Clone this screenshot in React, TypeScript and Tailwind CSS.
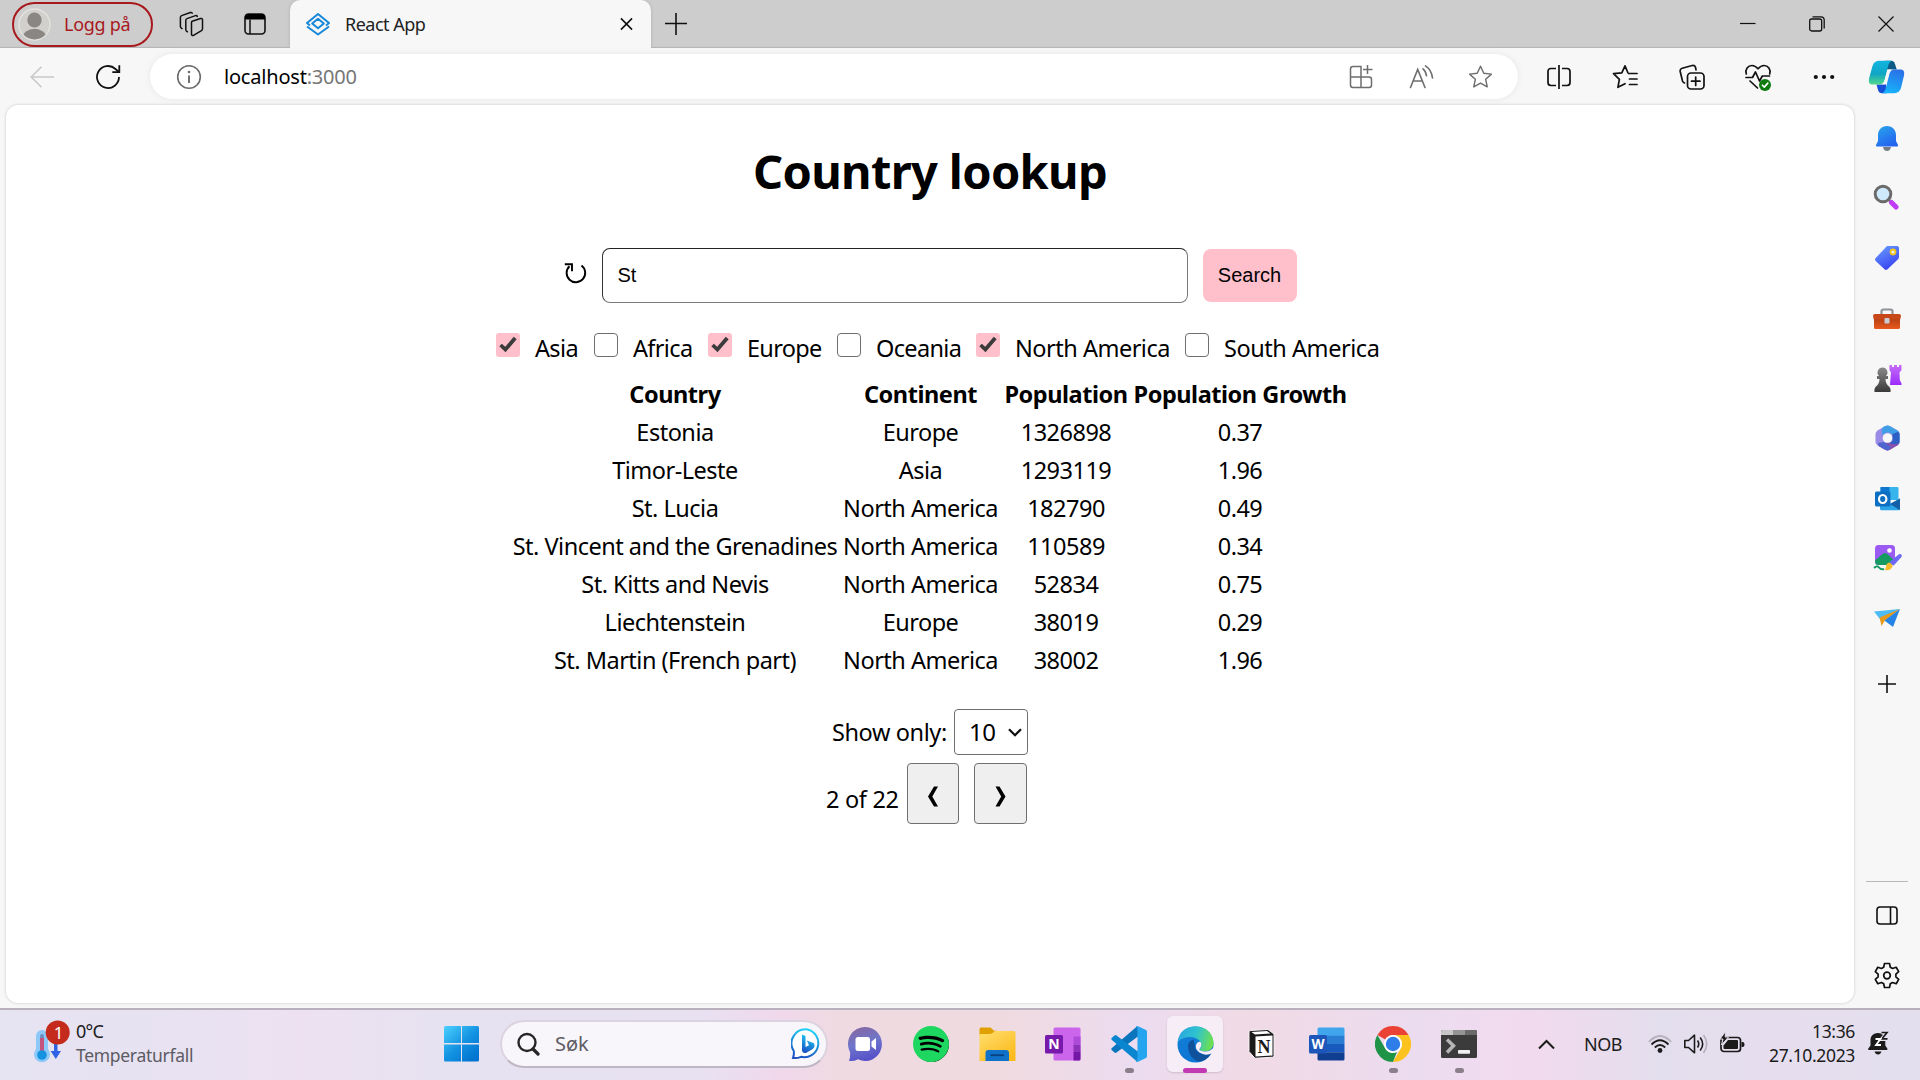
import React from "react";
import { SiSpotify } from "react-icons/si";

/* ---------- Title bar ---------- */

function TitleBar() {
  return (
    <header className="flex h-12 shrink-0 items-center bg-[#cdcdcd] shadow-[inset_0_-2px_1px_-1px_#b4b4b4]">
      <div className="ml-3 flex h-[45px] w-[141px] items-center rounded-full border-2 border-[#a8191e] pl-[4px]">
        <svg width="33" height="33" viewBox="0 0 33 33">
          <defs>
            <clipPath id="avatar">
              <circle cx="16.5" cy="16.5" r="15" />
            </clipPath>
          </defs>
          <circle cx="16.5" cy="16.5" r="15.5" fill="#d2d0cd" stroke="#e4e2de" strokeWidth="1.4" />
          <g clipPath="url(#avatar)" fill="#8a8683">
            <ellipse cx="16.5" cy="12" rx="7.2" ry="7.6" />
            <ellipse cx="16.5" cy="30" rx="12" ry="9.2" />
          </g>
        </svg>
        <span className="ml-[13px] text-[18px] leading-6 tracking-[-0.3px] text-[#a8191e]">Logg på</span>
      </div>
      <svg className="ml-[26px]" width="25" height="26" viewBox="0 0 25 26" fill="none" stroke="#111" strokeWidth="1.5" strokeLinejoin="round" strokeLinecap="round">
        <path d="M13.200 10.200 21.500 7.500q2-.5 2 1.300v9q0 1.200-1 1.800l-7.600 4.600q-1.700.8-2.400-.6V11.600q0-1 .7-1.400Z" />
        <path d="M18.300 5.400q-.4-1.200-1.800-.8L8 7.600q-1.200.4-1.200 1.700v9.400q0 1 1.700 2.100" />
        <path d="M13.200 2.300q-.5-1.200-1.800-.8L2.600 4.600q-1.200.5-1.200 1.700v9.200q0 1.200 1.600 2.200" />
      </svg>
      <svg className="ml-[40px]" width="22" height="22" viewBox="0 0 22 22" fill="none">
        <rect x="1" y="1" width="20" height="20" rx="3.500" stroke="#111" strokeWidth="1.600" />
        <path d="M1 6.500V4a3 3 0 0 1 3-3h14a3 3 0 0 1 3 3v2.500Z" fill="#000" />
        <path d="M6 6.500V21" stroke="#111" strokeWidth="1.500" />
      </svg>
      <div className="ml-[24px] flex h-12 w-[361px] items-center rounded-t-[10px] bg-[#f7f7f7] shadow-[0_0_3px_#aaa]">
        <svg className="ml-[15px]" width="26" height="24" viewBox="0 0 26 24" fill="none" stroke="#1787d8" strokeWidth="2" strokeLinejoin="round">
          <path d="M5 13.500 2 11 13 2l11 9-3 2.500" />
          <path d="m13 6.800 5.800 4.700-5.800 4.700-5.800-4.700Z" />
          <path d="m2 14.500 11 8 11-8" />
        </svg>
        <span className="ml-[14px] text-[18px] leading-6 tracking-[-0.5px] text-[#222]">React App</span>
        <svg className="mr-[18px] ml-auto" width="13" height="14" viewBox="0 0 14 14" stroke="#111" strokeWidth="1.700">
          <path d="m1 1 12 12M13 1 1 13" />
        </svg>
      </div>
      <svg className="ml-[14px]" width="22" height="22" viewBox="0 0 22 22" stroke="#111" strokeWidth="1.600">
        <path d="M0 10.500h22M11 0v22" />
      </svg>
      <div className="mr-[26px] ml-auto flex items-center gap-[53px]">
        <svg width="16" height="16" viewBox="0 0 16 16" stroke="#111" strokeWidth="1.200">
          <path d="M0 7.500h15.500" />
        </svg>
        <svg width="16" height="16" viewBox="0 0 16 16" fill="none" stroke="#111" strokeWidth="1.300">
          <rect x=".7" y="3" width="12" height="12" rx="2" />
          <path d="M3.500.8h8.500q3.200 0 3.200 3.200v8.500" />
        </svg>
        <svg width="16" height="16" viewBox="0 0 16 16" stroke="#111" strokeWidth="1.200">
          <path d="m.5.5 15 15M15.500.5l-15 15" />
        </svg>
      </div>
    </header>
  );
}

/* ---------- Toolbar ---------- */

const STAR = "m13 1.800 3.400 7.300 7.900.9-5.900 5.400 1.600 7.900-7-4-7 4 1.600-7.900L1.700 10l7.900-.9Z";

function Toolbar() {
  return (
    <div className="flex h-[57px] shrink-0 items-center bg-[#f7f7f7]">
      <svg className="ml-[30px]" width="24" height="22" viewBox="0 0 24 22" fill="none" stroke="#c9c9c9" strokeWidth="1.600">
        <path d="M24 11H1.500M11.500.8 1.200 11l10.300 10.200" />
      </svg>
      <svg className="ml-[41px]" width="26" height="26" viewBox="0 0 26 26" fill="none" stroke="#111" strokeWidth="1.800">
        <path d="M24 13A11 11 0 1 1 20.500 5L24 8" />
        <path d="M24.300 1.200v7h-7" />
      </svg>
      <div className="ml-[29px] flex h-[45px] w-[1368px] items-center rounded-full bg-white shadow-[0_0_6px_#e6e6e6]">
        <svg className="ml-[26px]" width="26" height="26" viewBox="0 0 26 26" fill="none" stroke="#6b6b6b" strokeWidth="1.600">
          <circle cx="13" cy="13" r="11.300" />
          <path d="M13 11.500v7.500" strokeWidth="1.900" />
          <circle cx="13" cy="8" r="1.300" fill="#6b6b6b" stroke="none" />
        </svg>
        <span className="ml-[22px] text-[20px] leading-6 tracking-[-0.2px] text-black">
          localhost<span className="text-[#767676]">:3000</span>
        </span>
        <svg className="ml-auto" width="24" height="24" viewBox="0 0 24 24" fill="none" stroke="#6e6e6e" strokeWidth="1.500">
          <path d="M12 22.500V1.500H4Q1.500 1.500 1.500 4v16q0 2.500 2.500 2.500h16q2.500 0 2.500-2.500v-5.500q0-2.500-2.500-2.500H1.500M18.500 0v9M14 4.500h9.500" />
        </svg>
        <svg className="ml-[36px]" width="26" height="24" viewBox="0 0 26 24" fill="none" stroke="#6e6e6e" strokeWidth="1.600" strokeLinecap="round">
          <path d="M1.500 22.500 8.700 4.500l7.300 18M4 16h9.500" />
          <path d="M14 3.800q3 2.500 3.500 7M16.500.9q6 4 7 12" />
        </svg>
        <svg className="mr-[25px] ml-[33px]" width="25" height="25" viewBox="0 0 26 25" fill="none" stroke="#6e6e6e" strokeWidth="1.500" strokeLinejoin="round">
          <path d={STAR} />
        </svg>
      </div>
      <svg className="ml-[29px]" width="24" height="24" viewBox="0 0 24 24" fill="none" stroke="#111" strokeWidth="1.700">
        <path d="M12 0v24M9 3.500H4Q1 3.500 1 6.500v11q0 3 3 3h5M15 3.500h5q3 0 3 3v11q0 3-3 3h-5" />
      </svg>
      <svg className="ml-[41px]" width="26" height="25" viewBox="0 0 26 25" fill="none" stroke="#111" strokeWidth="1.700" strokeLinejoin="round" strokeLinecap="round">
        <path d="M15.800 8.500 13 1.800 9.800 8.900 1.500 9.600l5.900 5.700-1.500 8 7.100-3.600M16.500 9.500H25M17.500 15H25M17.500 20.500H25" />
      </svg>
      <svg className="ml-[41px]" width="26" height="26" viewBox="0 0 26 26" fill="none" stroke="#111" strokeWidth="1.700" strokeLinecap="round">
        <rect x="8.500" y="9" width="16.500" height="16" rx="3.500" />
        <path d="M16.700 13v8.500M12.500 17.200h8.500M5.500 19Q4 18.500 3.500 17L1.200 7.500q-.5-2.500 2-3.200l10-2.800q2.500-.5 3.300 1.800l.5 2.500" />
      </svg>
      <svg className="ml-[39px]" width="28" height="28" viewBox="0 0 28 28" fill="none" stroke="#111" strokeWidth="1.700" strokeLinejoin="round" strokeLinecap="round">
        <path d="M2.300 11C.8 6.500 4 2.500 8 2.500c3 0 4.600 1.700 6 3.300 1.400-1.600 3-3.300 6-3.300 4 0 7.200 4 5.700 8.500M2 14.500h6.500l3-5.500 4 9 2.800-5h7.200M6 18l7.500 7" />
        <circle cx="21" cy="22" r="6" fill="#0f7b0f" stroke="none" />
        <path d="m18.400 22.200 1.900 1.900 3.500-4" stroke="#fff" strokeWidth="1.600" />
      </svg>
      <svg className="ml-[41px]" width="22" height="6" viewBox="0 0 22 6" fill="#111">
        <circle cx="2.800" cy="3" r="2.100" />
        <circle cx="11" cy="3" r="2.100" />
        <circle cx="19.200" cy="3" r="2.100" />
      </svg>
      <svg className="ml-[33px]" width="37" height="34" viewBox="0 0 37 34">
        <defs>
          <linearGradient id="copA" x1="0" y1="0" x2="0" y2="1">
            <stop offset="0" stopColor="#12b5e0" />
            <stop offset=".55" stopColor="#10a5c5" />
            <stop offset="1" stopColor="#52d98a" />
          </linearGradient>
          <linearGradient id="copB" x1=".6" y1="0" x2=".3" y2="1">
            <stop offset="0" stopColor="#2a72e8" />
            <stop offset="1" stopColor="#16b4fb" />
          </linearGradient>
        </defs>
        <path d="M17 .8h6q3 0 4 3.200l1.700 5.500H19Z" fill="#0d5a86" />
        <path d="M19 33.200h-5q-3 0-4-3.200L8.500 24.500H18Z" fill="#1750d8" />
        <path d="M10.500.8H24q-2.500.6-3.500 4l-4 15.700q-1.200 4-5.500 4H4Q0 24.500 1 18.500L4.500 6q1.500-5 6-5.200Z" fill="url(#copA)" />
        <path d="M26.500 33.200H14q2.700-.8 3.500-4l4-15.700q1.200-4 5.500-4h6q4 0 3 6L33 28q-1.500 5-6.500 5.200Z" fill="url(#copB)" />
        <path d="M19.700 9.500h3.800q-1.700 1-2.300 3.500l-2.500 9q-.7 2.400-4.700 2.500 1.800-1 2.500-4Z" fill="#f7f7f7" />
      </svg>
    </div>
  );
}

/* ---------- Page ---------- */

type Continent = { name: string; checked: boolean; label: string };

const continents: Continent[] = [
  { name: "Asia", checked: true, label: "w-[74px] tracking-[-0.65px]" },
  { name: "Africa", checked: false, label: "w-[90px] tracking-[-0.65px]" },
  { name: "Europe", checked: true, label: "w-[105px] tracking-[-0.7px]" },
  { name: "Oceania", checked: false, label: "w-[115px] tracking-[-0.65px]" },
  { name: "North America", checked: true, label: "w-[185px] tracking-[-0.5px]" },
  { name: "South America", checked: false, label: "w-[185px] tracking-[-0.45px]" },
];

const rows: string[][] = [
  ["Estonia", "Europe", "1326898", "0.37"],
  ["Timor-Leste", "Asia", "1293119", "1.96"],
  ["St. Lucia", "North America", "182790", "0.49"],
  ["St. Vincent and the Grenadines", "North America", "110589", "0.34"],
  ["St. Kitts and Nevis", "North America", "52834", "0.75"],
  ["Liechtenstein", "Europe", "38019", "0.29"],
  ["St. Martin (French part)", "North America", "38002", "1.96"],
];

function Checkbox({ checked }: { checked: boolean }) {
  return checked ? (
    <span className="mb-[6px] flex size-6 shrink-0 items-center justify-center rounded-[3px] bg-[#ffc0cb]">
      <svg width="24" height="24" viewBox="0 0 24 24" fill="none" stroke="#3b3b3b" strokeWidth="3.800">
        <path d="m4.600 12 4.800 4.600L19.200 5" />
      </svg>
    </span>
  ) : (
    <span className="mb-[6px] size-6 shrink-0 rounded-[4px] border border-[#6f6f6f] bg-white" />
  );
}

function Page() {
  return (
    <main className="ml-1.5 h-[898px] w-[1848px] shrink-0 rounded-xl bg-white text-black shadow-[0_0_3px_#c4c4c4]">
      <h1 className="pt-[34px] text-center text-[47px] leading-[64px] font-bold tracking-[-0.65px]">Country lookup</h1>
      <div className="mt-[45px] flex h-[55px] items-center justify-center font-['Liberation_Sans',Arial,sans-serif] text-[20px]">
        <svg className="mr-[15px] mb-[6px]" width="23" height="22" viewBox="0 0 23 22" fill="none" stroke="#000" strokeWidth="1.900">
          <path d="M17.500 3.500A9.300 9.300 0 1 1 5.500 4.200" />
          <path d="M.8 2.200H8v7" />
        </svg>
        <div className="flex h-[55px] w-[586px] items-center rounded-lg border border-[#7a7a7a] border-t-[#222] border-l-[#333] pb-[2px] pl-[15px]">St</div>
        <button className="ml-[15px] h-[53px] w-[94px] rounded-lg bg-[#ffc0cb] pb-[2px]">Search</button>
      </div>
      <div className="mt-[25px] ml-[490px] flex h-10 items-center text-[23.5px] leading-10">
        {continents.map((c) => (
          <React.Fragment key={c.name}>
            <Checkbox checked={c.checked} />
            <span className={`${c.label} shrink-0 pl-[15px] whitespace-nowrap`}>{c.name}</span>
          </React.Fragment>
        ))}
      </div>
      <table className="mt-[7px] ml-[504px] w-[839px] table-fixed border-collapse text-center text-[23.5px] leading-[38px]">
        <colgroup>
          <col className="w-[330px]" />
          <col className="w-[161px]" />
          <col className="w-[130px]" />
          <col className="w-[218px]" />
        </colgroup>
        <thead>
          <tr className="h-[38px] tracking-[-0.45px] whitespace-nowrap">
            <th className="p-0">Country</th>
            <th className="p-0">Continent</th>
            <th className="p-0">Population</th>
            <th className="p-0">Population Growth</th>
          </tr>
        </thead>
        <tbody>
          {rows.map((r) => (
            <tr key={r[0]} className="h-[38px] tracking-[-0.5px] whitespace-nowrap">
              {r.map((cell, i) => (
                <td key={i} className="p-0">{cell}</td>
              ))}
            </tr>
          ))}
        </tbody>
      </table>
      <div className="mt-[30px] ml-[826px] flex h-[46px] items-center text-[23.5px] tracking-[-0.4px]">
        <span className="w-[122px] pt-[2px] whitespace-nowrap">Show only:</span>
        <div className="flex h-[46px] w-[74px] items-center rounded-[4px] border border-[#6f6f6f] bg-white pl-[14px] text-[24px]">
          10
          <svg className="mr-[5px] ml-auto" width="14" height="9" viewBox="0 0 14 9" fill="none" stroke="#111" strokeWidth="2.300">
            <path d="m1 1.200 6 6 6-6" />
          </svg>
        </div>
      </div>
      <div className="mt-2 ml-[820px] flex h-[61px] items-center text-[23.5px] tracking-[-0.3px]">
        <span className="w-[81px] pt-[12px] whitespace-nowrap">2 of 22</span>
        <button className="flex h-[61px] w-[52px] items-center justify-center rounded-[4px] border border-[#6f6f6f] bg-[#efefef] pt-[5px]">
          <svg width="12" height="21" viewBox="0 0 12 21">
            <path d="M7 .5h4L5.300 10.500 11 20.500H7L1 10.500Z" />
          </svg>
        </button>
        <button className="ml-[15px] flex h-[61px] w-[53px] items-center justify-center rounded-[4px] border border-[#6f6f6f] bg-[#efefef] pt-[5px]">
          <svg width="12" height="21" viewBox="0 0 12 21">
            <path d="M4.500.5h-4L6.200 10.500.5 20.500h4l6-10Z" />
          </svg>
        </button>
      </div>
    </main>
  );
}

/* ---------- Sidebar ---------- */

const sidebarIcons: React.ReactNode[] = [
  <svg key="bell" width="24" height="27" viewBox="0 0 24 27">
    <defs>
      <linearGradient id="bell" x1="0" y1="0" x2=".6" y2="1">
        <stop offset="0" stopColor="#28a8ea" />
        <stop offset="1" stopColor="#2463f0" />
      </linearGradient>
    </defs>
    <path d="M8 22h8q-.8 4-4 4t-4-4Z" fill="#757b84" />
    <path d="M12 1c5.500 0 9 4 9 9v6l2 4q.5 1.500-1 1.500H2Q.5 21.500 1 20l2-4v-6c0-5 3.500-9 9-9Z" fill="url(#bell)" />
  </svg>,
  <svg key="search" className="mr-[2px] mb-[2px]" width="26" height="26" viewBox="0 0 26 26">
    <path d="m14 14 5 5" stroke="#777" strokeWidth="2.500" />
    <path d="m18.500 18.500 4.500 4.500" stroke="#c13cf5" strokeWidth="5" strokeLinecap="round" />
    <circle cx="10" cy="10" r="7.800" fill="#cfeafd" stroke="#6b6b6b" strokeWidth="3" />
  </svg>,
  <svg key="tag" width="26" height="26" viewBox="0 0 26 26">
    <defs>
      <linearGradient id="tag" x1="0" y1="0" x2=".5" y2="1">
        <stop offset="0" stopColor="#6ba3ff" />
        <stop offset="1" stopColor="#3a45f2" />
      </linearGradient>
    </defs>
    <path d="M13.500 1H23q2 0 2 2v9q0 1.200-1 2.200L13.500 24.300q-1.500 1.400-3 0L1.700 16q-1.400-1.500 0-3L12 2q.7-1 1.500-1Z" fill="url(#tag)" />
    <circle cx="19" cy="7" r="2.500" fill="#ececff" stroke="#f5c514" strokeWidth="1.800" />
  </svg>,
  <svg key="toolbox" className="mt-[2px]" width="28" height="22" viewBox="0 0 28 22">
    <defs>
      <linearGradient id="box" x1="0" y1="0" x2="0" y2="1">
        <stop offset="0" stopColor="#a93a12" />
        <stop offset="1" stopColor="#e8591c" />
      </linearGradient>
    </defs>
    <path d="M8.500 7V3.500q0-2 2-2h7q2 0 2 2V7" fill="none" stroke="#8e9196" strokeWidth="2.200" />
    <rect x="1" y="8" width="26" height="13" rx="1.500" fill="url(#box)" />
    <path d="M2 6h24q2 0 2 2l-.8 3.500H.8L0 8q0-2 2-2Z" fill="#c8481a" />
    <rect x="11.500" y="10" width="5" height="5.500" rx="1" fill="#c9ccd0" />
  </svg>,
  <svg key="games" width="29" height="29" viewBox="0 0 29 29">
    <defs>
      <linearGradient id="pawn" x1="0" y1="0" x2="0" y2="1">
        <stop offset="0" stopColor="#8a8a8a" />
        <stop offset="1" stopColor="#3a3a3a" />
      </linearGradient>
      <linearGradient id="rook" x1="0" y1="0" x2="0" y2="1">
        <stop offset="0" stopColor="#c56cf8" />
        <stop offset="1" stopColor="#9b2cfb" />
      </linearGradient>
    </defs>
    <path d="M16.500 1h2.500v2h2V1h3v2h2V1h2.500v5l-2 2.500.3 7.500 1.700 3.500v1.500H17l.3-4 .7-8.500-1.500-2.500Z" fill="url(#rook)" />
    <path d="M9.500 3.500a5 5 0 0 1 3.500 8.500h2v3h-2.500q0 5 3.500 7.500 2 1.500 1.500 5.500h-16Q1 24 3 22.500 6.500 20 6.500 15H4v-3h2A5 5 0 0 1 9.500 3.500Z" fill="url(#pawn)" />
  </svg>,
  <svg key="m365" width="25" height="26" viewBox="0 0 25 26">
    <defs>
      <clipPath id="hex">
        <path d="M10 1.200q2.500-1.200 5 0l7.500 4.300Q24.500 7 24.500 9v8q0 2-2 3.300L15 24.800q-2.500 1.200-5 0l-7.500-4.500Q.5 19 .5 17V9q0-2 2-3.500Z" />
      </clipPath>
    </defs>
    <g clipPath="url(#hex)">
      <path d="M0 0h25v26H0Z" fill="#9a8ce6" />
      <path d="M8 0h17v18l-7-2V9.500L12.500 7 7 10V4Z" fill="#3f9fe6" />
      <path d="M17.500 9 25 6v13l-8 3-4-3 4.500-3Z" fill="#2e5fc4" />
      <path d="M1 21q6-.5 11.500-3.500 7 3 12.500.5v9H6Z" fill="#8a50ae" />
      <path d="m3 18 6-1 7 5-3 4-9-4Z" fill="#4f66d0" />
    </g>
    <circle cx="12.500" cy="13" r="4.800" fill="#f7f7f7" />
  </svg>,
  <svg key="outlook" width="25" height="25" viewBox="0 0 25 25">
    <rect x="5.500" y="1" width="18" height="13" rx="1.300" fill="#38b4ec" />
    <rect x="5.500" y="1" width="9" height="6" fill="#0f78ce" />
    <path d="M5 13.500 15 18l10-5.500v10.200q0 1.600-1.600 1.600H6.600Q5 24.300 5 22.700Z" fill="#2ba5e8" />
    <path d="M15 18 25 12.500v10.200q0 .8-.5 1.200Z" fill="#135fa8" />
    <rect x="0" y="5.500" width="15.500" height="15" rx="1.500" fill="#0b6fc4" />
    <ellipse cx="7.700" cy="13" rx="3.700" ry="4" fill="none" stroke="#fff" strokeWidth="2.200" />
  </svg>,
  <svg key="designer" width="29" height="28" viewBox="0 0 29 28">
    <rect x="2" y="1" width="20" height="20" rx="3.500" fill="#9b5bf2" />
    <circle cx="16.500" cy="6.500" r="2.300" fill="#fff" />
    <path d="M2 16.500 9.500 10q2.500-1.800 5 0l6.500 6q-1 5-3 5H5.500Q2 21 2 16.500Z" fill="#159a62" />
    <path d="M1 24q3-3 5-.5t5 1.500" fill="none" stroke="#159a62" strokeWidth="2" />
    <path d="m17.500 18.500 9-7.500q1.700-.5 1.300 1.500l-7.300 8Z" fill="#6f6af4" stroke="#6f6af4" strokeWidth="1.800" strokeLinejoin="round" />
    <path d="M16 18.500q3.500 1 3.500 4-1.500 4.500-8 3.500 1.500-1 1.500-3.500 0-3 3-4Z" fill="#f5bd2c" />
  </svg>,
  <svg key="drop" width="28" height="20" viewBox="0 0 28 20">
    <path d="M1 3.500 27 1 8.500 13Z" fill="#4dbbf5" />
    <path d="M27 1 6.500 9.500 8.500 18l3-5Z" fill="#e89a1c" />
    <path d="M27 1 11.500 12.500 20 19Z" fill="#2684e8" />
  </svg>,
];

function Sidebar() {
  return (
    <aside className="flex flex-1 flex-col items-center pt-[3px] pb-[3px]">
      {sidebarIcons.map((icon, i) => (
        <div key={i} className="flex h-[60px] items-center justify-center">{icon}</div>
      ))}
      <div className="flex h-[70px] items-center">
        <svg className="mt-px mr-px" width="20" height="20" viewBox="0 0 20 20" stroke="#111" strokeWidth="1.600">
          <path d="M1 10h18M10 1v18" />
        </svg>
      </div>
      <div className="mt-auto mb-[3px] h-px w-[42px] bg-[#b9b9b9]" />
      <div className="flex h-[60px] items-center">
        <svg width="22" height="19" viewBox="0 0 22 19" fill="none" stroke="#111" strokeWidth="1.600">
          <rect x="1" y="1" width="20" height="17" rx="3" />
          <path d="M14.500 1v17" />
        </svg>
      </div>
      <div className="flex h-[60px] items-center">
        <svg width="26" height="27" viewBox="0 0 26 27" fill="none" stroke="#111" strokeWidth="1.700" strokeLinejoin="round">
          <path d="M10.500 1.500h5l.8 3.700 2.300 1.300 3.600-1.200 2.500 4.300-2.800 2.500v2.800l2.800 2.500-2.500 4.300-3.600-1.200-2.300 1.300-.8 3.700h-5l-.8-3.700-2.300-1.300-3.600 1.200-2.500-4.300 2.800-2.500v-2.800L1.300 9.600l2.500-4.300 3.600 1.200 2.300-1.300Z" />
          <circle cx="13" cy="13.500" r="3.300" />
        </svg>
      </div>
    </aside>
  );
}

/* ---------- Taskbar ---------- */

function AppSlot({ children, running, active }: { children: React.ReactNode; running?: boolean; active?: boolean }) {
  return (
    <div
      className={
        active
          ? "relative mx-[5px] flex h-14 w-14 shrink-0 items-center justify-center rounded-md bg-[#f7edf6] shadow-[0_1px_2px_#cdbccb]"
          : "relative flex h-14 w-[66px] shrink-0 items-center justify-center"
      }
    >
      {children}
      {running && <span className="absolute bottom-[-1px] h-[5px] w-[9px] rounded-full bg-[#8a7f8b]" />}
      {active && <span className="absolute bottom-[-1px] h-[5px] w-6 rounded-full bg-[#c239b3]" />}
    </div>
  );
}

function Taskbar() {
  return (
    <footer className="flex h-[72px] shrink-0 items-center border-t-2 border-[#b8b0bd] bg-[linear-gradient(90deg,#e6e3f2_0px,#e8e2f2_200px,#ede1f1_300px,#e6e2f1_450px,#e7e1f2_700px,#f0d8ec_775px,#efdae1_840px,#efdadf_1000px,#ecdcf0_1135px,#f0dae5_1250px,#ecdcf0_1420px,#f2daee_1530px,#e3deed_1660px,#e6deee_1780px,#e3dfee_1920px)] pb-[2px]">
      <div className="ml-8 flex w-[412px] items-center pb-[2px]">
        <svg width="38" height="52" viewBox="0 0 38 52" className="-mt-[6px]">
          <path d="M4 22a6 6 0 0 1 12 0v13a8 8 0 1 1-12 0Z" fill="#8cc8f8" />
          <rect x="8" y="20" width="4" height="22" rx="2" fill="#6f8fc0" />
          <rect x="8" y="24" width="4" height="18" fill="#c4547e" />
          <circle cx="10" cy="41" r="4.800" fill="#1593e0" />
          <path d="M22 28h3.500v9h3.500l-5.200 8-5.200-8H22Z" fill="#2d63e4" />
          <circle cx="25.700" cy="18.500" r="12" fill="#c42b1c" />
          <text x="26.500" y="24.500" textAnchor="middle" fontSize="17" fill="#fff" fontFamily="Noto Sans, sans-serif">1</text>
        </svg>
        <div className="ml-[6px] text-[18px] leading-6 text-[#1b1b1b]">
          <p className="tracking-[-0.7px]">0°C</p>
          <p className="text-[17.5px] tracking-[-0.3px] text-[#5d5b63]">Temperaturfall</p>
        </div>
      </div>
      <svg width="35" height="36" viewBox="0 0 35 36">
        <defs>
          <linearGradient id="win" gradientUnits="userSpaceOnUse" x1="0" y1="0" x2="30" y2="34">
            <stop offset="0" stopColor="#4cd0fd" />
            <stop offset=".55" stopColor="#1493e2" />
            <stop offset="1" stopColor="#0072cf" />
          </linearGradient>
        </defs>
        <path d="M1.500 0H17v17H0V1.500Q0 0 1.500 0ZM18 0h15.500Q35 0 35 1.500V17H18ZM0 18.500h17v17H1.500Q0 35.500 0 34ZM18 18.500h17V34q0 1.500-1.500 1.500H18Z" fill="url(#win)" />
      </svg>
      <div className="ml-[21px] flex h-12 w-[328px] shrink-0 items-center rounded-full border-2 border-[#dcd3e0] border-b-[#bfb6c3] bg-[#f8f5fb]">
        <svg className="ml-[15px]" width="23" height="24" viewBox="0 0 23 24" fill="none" stroke="#262626">
          <circle cx="10" cy="10.500" r="8.500" strokeWidth="2.400" />
          <path d="m16 17 5 5" strokeWidth="3.200" strokeLinecap="round" />
        </svg>
        <span className="ml-[15px] text-[20px] leading-6 text-[#5d5b63]">Søk</span>
        <svg className="mr-[3px] ml-auto" width="32" height="32" viewBox="0 0 32 32">
          <defs>
            <linearGradient id="bing" x1=".6" y1="0" x2=".3" y2="1">
              <stop offset="0" stopColor="#1fd0f5" />
              <stop offset="1" stopColor="#1a4fc4" />
            </linearGradient>
          </defs>
          <path d="M16.500 1.500A14 14 0 1 1 10 28.800q-4 1.700-8 1.200 1.200-3 .8-7A14 14 0 0 1 16.500 1.500Z" fill="#fff" stroke="url(#bing)" strokeWidth="2" />
          <path d="M11 6.500 14.500 8v11l3.500-1.800-2.200-4.700 7.200 2.800q1.500 3.700-1.200 5.700L15 25q-4 .5-4-3Z" fill="url(#bing)" />
        </svg>
      </div>
      <div className="ml-[4px] flex items-center">
        <AppSlot>
          <svg width="35" height="36" viewBox="0 0 35 36">
            <defs>
              <linearGradient id="chat" x1=".2" y1="0" x2=".5" y2="1">
                <stop offset="0" stopColor="#8567a0" />
                <stop offset=".5" stopColor="#6f76cc" />
                <stop offset="1" stopColor="#5550c8" />
              </linearGradient>
            </defs>
            <path d="M17.500 1A16.500 17 0 1 1 10 33.200Q6 35.500 1 35q1.500-4 1-9A17 17 0 0 1 17.500 1Z" fill="url(#chat)" />
            <rect x="7.500" y="11" width="14.500" height="14" rx="2.500" fill="#fff" />
            <path d="m23.500 15.500 4.500-3.500v12l-4.500-3.500Z" fill="#fff" />
          </svg>
        </AppSlot>
        <AppSlot>
          <span className="flex size-[35px] items-center justify-center rounded-full bg-black">
            <SiSpotify size={36} color="#1ed760" className="shrink-0" />
          </span>
        </AppSlot>
        <AppSlot>
          <svg width="37" height="35" viewBox="0 0 37 35">
            <defs>
              <linearGradient id="folder" x1="0" y1="0" x2=".7" y2="1">
                <stop offset="0" stopColor="#ffdf70" />
                <stop offset="1" stopColor="#fcba1c" />
              </linearGradient>
            </defs>
            <path d="M2 .5h9.500l3.500 3.200h3V9H.5V2Q.5.5 2 .5Z" fill="#e0a000" />
            <path d="M.5 7H11q2 0 3.500-1.800L16 4h19q1.500 0 1.500 1.500V34H.5Z" fill="url(#folder)" />
            <path d="M6.500 34V26q0-3 3-3H27q3 0 3 3v8Z" fill="#1071c8" />
            <path d="M11.500 28.200H25" stroke="#0a3f82" strokeWidth="1.800" />
          </svg>
        </AppSlot>
        <AppSlot>
          <svg width="36" height="34" viewBox="0 0 36 34">
            <rect x="8.500" y=".5" width="27" height="33" rx="1.500" fill="#cb66ec" />
            <path d="M28.500 9.500h7V17h-7Z" fill="#ad4bd8" />
            <path d="M28.500 17.500h7V25h-7Z" fill="#8d33ba" />
            <path d="M28.500 25h7v7q0 1.500-1.500 1.500h-5.500Z" fill="#7417a6" />
            <rect x="0" y="8" width="18" height="18.500" rx="1.500" fill="#7719aa" />
            <text x="9" y="22" textAnchor="middle" fontSize="14" fontWeight="700" fill="#fff" fontFamily="Open Sans, sans-serif">N</text>
          </svg>
        </AppSlot>
        <AppSlot running>
          <svg width="36" height="36" viewBox="0 0 36 36">
            <path d="m26.500 0 1 10L5.500 26.500q-1 .8-2 0l-2.600-2.300q-1.200-1 0-2.200Z" fill="#0a74bc" />
            <path d="m26.500 36 1-10L5.500 9.500q-1-.8-2 0L.9 11.800q-1.200 1 0 2.200Z" fill="#0a86d1" />
            <path d="M26.500 0 35 4q1 .5 1 1.700v24.600q0 1.200-1 1.700l-8.500 4q-1.200.2-2-.6 2 .6 2-1.600V2.200q0-2.200-2-1.600.8-.8 2-.6Z" fill="#25a5f0" />
          </svg>
        </AppSlot>
        <AppSlot active>
          <svg width="37" height="37" viewBox="0 0 37 37">
            <defs>
              <linearGradient id="edgeTop" x1="0" y1=".3" x2="1" y2=".5">
                <stop offset="0" stopColor="#2aa6e0" />
                <stop offset=".5" stopColor="#2fc3cf" />
                <stop offset="1" stopColor="#6fe04c" />
              </linearGradient>
              <linearGradient id="edgeLeft" x1="0" y1="0" x2=".3" y2="1">
                <stop offset="0" stopColor="#1583d8" />
                <stop offset="1" stopColor="#0c74d4" />
              </linearGradient>
            </defs>
            <circle cx="18.500" cy="18.500" r="18" fill="url(#edgeLeft)" />
            <path d="M11 20q0 9 6.500 13.500 5 3.500 10.500.5 4-2.500 6.500-7-7 3.500-13-.5-4-3-3.500-7l-1.500-6q-5.500 1.500-5.500 6.500Z" fill="#10519c" />
            <path d="M.7 16Q3 .5 18.500.5 34 1 36.500 15.500q.3 6.500-4.500 9-5 1.700-8.500 0-1.500-1 0-2.500 2.300-3-.3-6.500-3-4-9.200-4.500Q5 11 .7 16Z" fill="url(#edgeTop)" />
            <path d="M23.500 16q2 3-.3 6-1.500 1.700 0 2.600 5 2 9.800 0l4-3 .5 1-2 4.400q-7 3.500-13-.5-4.500-3-3.500-7.500 1.500-4 4.500-3Z" fill="#f7edf6" />
          </svg>
        </AppSlot>
        <AppSlot>
          <svg width="27" height="30" viewBox="0 0 27 30">
            <path d="M2 1.500 20 .5l6 4.500v21.500q0 1.500-1.500 1.700L7 29.300 1 22.500V3Q1 1.700 2 1.500Z" fill="#1a1a1a" stroke="#f6f2f4" strokeWidth="1" />
            <path d="M7.500 7.500 24.500 6.500v20L7.500 27.500Z" fill="#fff" />
            <path d="m3.500 3 15.500-1 3.500 2.500L7 5.500Z" fill="#fff" />
            <text x="16" y="23.500" textAnchor="middle" fontSize="18" fontWeight="700" fill="#1a1a1a" fontFamily="Liberation Serif, serif">N</text>
          </svg>
        </AppSlot>
        <AppSlot>
          <svg width="36" height="34" viewBox="0 0 36 34">
            <path d="M8.500 9V2q0-1.500 1.500-1.500h24q1.500 0 1.500 1.500v7Z" fill="#41a5ee" />
            <path d="M8.500 8.700h27V17h-27Z" fill="#2b7cd3" />
            <path d="M8.500 17h27v8.200h-27Z" fill="#185abd" />
            <path d="M8.500 25.200h27V32q0 1.500-1.500 1.500H10q-1.500 0-1.500-1.500Z" fill="#103f91" />
            <rect x="0" y="8" width="18" height="18.500" rx="1.500" fill="#1d55b8" />
            <text x="9" y="22" textAnchor="middle" fontSize="13.500" fontWeight="700" fill="#fff" fontFamily="Open Sans, sans-serif">W</text>
          </svg>
        </AppSlot>
        <AppSlot running>
          <svg width="36" height="36" viewBox="0 0 36 36">
            <path d="M18 0A18 18 0 0 1 33.600 9H18a9 9 0 0 0-7.800 4.500L2.400 9A18 18 0 0 1 18 0Z" fill="#ea4335" />
            <path d="M2.400 9 10.200 22.500A9 9 0 0 0 18 27l3.900-.9L18 36A18 18 0 0 1 2.400 9Z" fill="#1f9447" />
            <path d="M33.600 9A18 18 0 0 1 18 36l7.800-13.500A9 9 0 0 0 18 9Z" fill="#fcc31e" />
            <circle cx="18" cy="18" r="9" fill="#fff" />
            <circle cx="18" cy="18" r="7.200" fill="#2f7de9" />
          </svg>
        </AppSlot>
        <AppSlot running>
          <svg width="36" height="28" viewBox="0 0 36 28">
            <rect width="36" height="28" rx="1.500" fill="#3b3b3b" />
            <path d="M1.500 0H12v5H0V1.500Q0 0 1.500 0Z" fill="#c6c6c6" />
            <path d="M12 0h12v5H12Z" fill="#949494" />
            <path d="M24 0h10.500Q36 0 36 1.500V5H24Z" fill="#6a6a6a" />
            <path d="m6 9.500 6.500 6.300L6 22.500" fill="none" stroke="#b5b5b5" strokeWidth="3.500" />
            <rect x="17" y="20" width="12" height="3.800" rx=".8" fill="#f0f0f0" />
          </svg>
        </AppSlot>
      </div>
      <div className="mr-[31px] ml-auto flex items-center text-[18px] text-[#1b1b1b]">
        <svg width="17" height="11" viewBox="0 0 17 11" fill="none" stroke="#1b1b1b" strokeWidth="2">
          <path d="m1 9.500 7.500-7.500L16 9.500" />
        </svg>
        <span className="ml-[29px] w-[40px] tracking-[-0.5px]">NOB</span>
        <svg className="ml-[24px]" width="24" height="20" viewBox="0 0 24 20" fill="none" stroke="#1b1b1b" strokeWidth="1.800">
          <path d="M.8 8Q12-4 23.200 8" stroke="#b6b0bd" />
          <path d="M3.500 10.500q8.500-8.500 17 0M6.800 13.500q5.200-5 10.400 0" />
          <circle cx="12" cy="16.500" r="2.400" fill="#1b1b1b" stroke="none" />
        </svg>
        <svg className="ml-[12px]" width="24" height="20" viewBox="0 0 24 20" fill="none" stroke="#1b1b1b" strokeWidth="1.600" strokeLinejoin="round">
          <path d="M.8 6.500H4.500L10.500 1.200v17.600L4.500 13.500H.8Z" />
          <path d="M13.500 6.500q2.500 3.500 0 7M16.200 3.500q5 6.500 0 13" />
          <path d="M19.500 1q6.500 9 0 18" stroke="#b6b0bd" />
        </svg>
        <svg className="-mt-[3px] ml-[12px]" width="25" height="21" viewBox="0 0 25 21">
          <rect x="1" y="5.500" width="19.500" height="14" rx="3" fill="none" stroke="#1b1b1b" strokeWidth="1.700" />
          <path d="M8 8h9q1 0 1 1v7q0 1-1 1H4.500q-1 0-1-1v-2.500Z" fill="#1b1b1b" />
          <path d="M21.500 10h1.500q1.500.3 1.500 2.500T23 15h-1.500Z" fill="#1b1b1b" />
          <path d="M5.500-.5 0 7h3l-1.500 6L8.500 5H5.200Z" fill="#1b1b1b" stroke="#e5deed" strokeWidth="1" />
        </svg>
        <div className="ml-[20px] w-[90px] pb-[2px] text-right text-[17.5px] leading-6 tracking-[-0.35px]">
          <p>13:36</p>
          <p>27.10.2023</p>
        </div>
        <svg className="-mt-[2px] ml-[13px]" width="21" height="24" viewBox="0 0 21 24">
          <path d="M10 2C5.500 2 2.500 5 2.500 9v5.500L.3 17.500q-.5 1.500 1 1.500h17q1.500 0 1-1.500l-2-3V9C17.500 5 14.500 2 10 2ZM6.500 20.500h7q-1 3-3.500 3t-3.500-3Z" fill="#1b1b1b" />
          <path d="M13.500 1.500h6l-5.500 6.500h6" fill="none" stroke="#e5deed" strokeWidth="4" />
          <path d="M13.500 1.500h5.500l-5 6.300h5.500" fill="none" stroke="#1b1b1b" strokeWidth="1.700" />
          <path d="M7.500 8h5L8 14h5" fill="none" stroke="#fff" strokeWidth="1.800" />
        </svg>
      </div>
    </footer>
  );
}

export default function App() {
  return (
    <div className="flex h-[1080px] w-[1920px] flex-col overflow-hidden bg-[#f7f7f7] font-['Noto_Sans',sans-serif]">
      <TitleBar />
      <Toolbar />
      <div className="flex h-[903px] shrink-0">
        <Page />
        <Sidebar />
      </div>
      <Taskbar />
    </div>
  );
}
